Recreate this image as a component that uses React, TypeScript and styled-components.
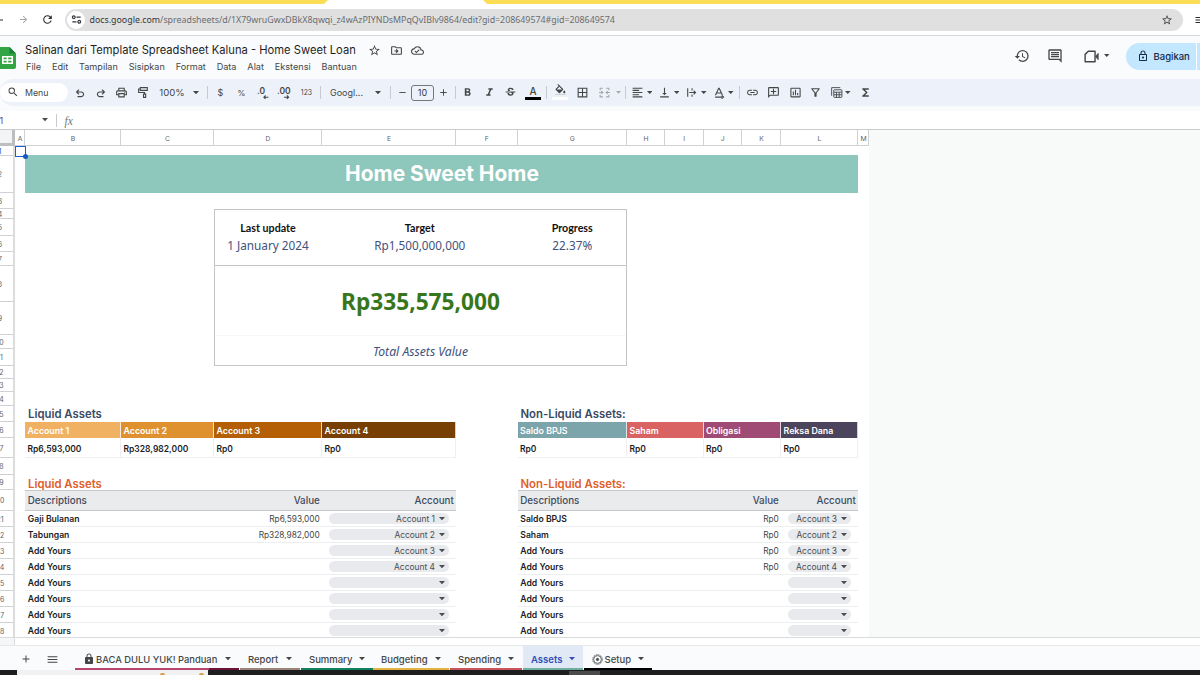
import React from 'react';
import styled, { createGlobalStyle, css } from 'styled-components';
import {
  MdOutlinePrint, MdStarBorder, MdOutlineDriveFileMove, MdOutlineCloudDone, MdHistory, MdOutlineComment,
  MdOutlineLock, MdLock, MdFormatBold, MdFormatItalic, MdStrikethroughS, MdFormatColorFill, MdBorderAll,
  MdFormatAlignLeft, MdVerticalAlignBottom, MdLink, MdOutlineAddComment, MdInsertChartOutlined,
  MdOutlineFilterAlt, MdFunctions, MdRefresh, MdArrowForward, MdArrowBack, MdSearch, MdAdd, MdRemove, MdMenu,
} from 'react-icons/md';

const Global = createGlobalStyle`
  *, *::before, *::after { box-sizing: border-box; }
  body { margin: 0; background: #fff; overflow: hidden; }
  svg { display: block; flex: none; }
`;

const Screen = styled.div`
  width: 1200px; height: 675px; overflow: hidden;
  display: flex; flex-direction: column;
  font-family: Inter, sans-serif; color: #444746; white-space: nowrap;
`;

/* ---------- browser chrome ---------- */
const TabStrip = styled.div`
  height: 4px; flex: none; display: flex; justify-content: space-between; background: #fff;
`;
const StripPart = styled.div<{ $side: 'left' | 'right' }>`
  background: #fbde55; height: 4px;
  width: ${p => (p.$side === 'left' ? 328 : 717)}px;
  clip-path: ${p => (p.$side === 'left'
    ? 'polygon(0 0, 100% 0, calc(100% - 4px) 100%, 0 100%)'
    : 'polygon(0 0, 100% 0, 100% 100%, 4px 100%)')};
`;
const AddressRow = styled.div`
  height: 32px; flex: none; display: flex; align-items: center; background: #fff;
  border-bottom: 1px solid #d5d6d8; color: #33363a;
`;
const NavIcon = styled.div<{ $w: number; $ml?: number; $dim?: boolean }>`
  width: ${p => p.$w}px; margin-left: ${p => p.$ml ?? 0}px; flex: none; display: flex; justify-content: center;
  color: ${p => (p.$dim ? '#a2a4a7' : '#2b2d30')};
`;
const UrlPill = styled.div`
  width: 1118px; height: 22px; margin-left: 12px; border-radius: 11px; background: #e0e0e0; flex: none;
  display: flex; align-items: center; padding: 0 10px 0 2px;
`;
const SiteInfo = styled.div`
  width: 18px; height: 18px; border-radius: 50%; background: #fff;
  display: flex; align-items: center; justify-content: center;
`;
const Url = styled.div`
  flex: 1; margin-left: 4.5px; font: 8.83px "Noto Sans", sans-serif; color: #6b6d70;
  span { color: #33363a; }
`;

/* ---------- document header ---------- */
const Header = styled.header`
  height: 43px; flex: none; display: flex; background: #f9fbfd; padding-top: 6px;
`;
const LogoBox = styled.div`width: 16px; height: 24px; margin-top: 4px; flex: none; overflow: hidden;`;
const TitleBlock = styled.div`margin-left: 9px; flex: 1;`;
const TitleRow = styled.div`
  display: flex; align-items: center; height: 16px; font-size: 11.2px; color: #1f1f1f;
`;
const TitleIcon = styled.div<{ $ml: number }>`margin: 1px 0 0 ${p => p.$ml}px; color: #444746;`;
const MenuRow = styled.nav`
  display: flex; gap: 10.85px; height: 17px; align-items: center; font-size: 9.12px; padding-left: 1px; color: #444746;
`;
const Actions = styled.div`display: flex; align-items: center; height: 28px;`;
const Action = styled.div<{ $ml: number }>`margin-left: ${p => p.$ml}px; color: #444746;`;
const Share = styled.div`
  width: 74.5px; height: 27px; margin-left: 16px; border-radius: 14px 0 0 14px; background: #c2e7ff; color: #13294b;
  display: flex; align-items: center; padding-left: 11px; font-size: 9.5px; font-weight: 500;
  i { width: 1px; height: 27px; background: #fff; margin-left: 6px; }
  span { margin-left: 5px; }
`;

/* ---------- toolbar ---------- */
const Toolbar = styled.div`
  height: 27px; flex: none; display: flex; align-items: center; background: #edf2fa;
  font-size: 9px; color: #444746; border-radius: 13px 0 0 13px;
`;
const ToolbarWrap = styled.div`height: 32px; flex: none; background: #f9fbfd;`;
const SearchPill = styled.div`
  width: 68px; height: 19px; border-radius: 10px; background: #fff; display: flex; align-items: center;
  padding: 0 0 0 7px; font-size: 8.8px; margin-top: -1px; flex: none;
  span { margin-left: 6px; }
`;
const Tool = styled.div<{ $ml: number; $w?: number; $color?: string; $size?: number; $flip?: boolean }>`
  width: ${p => p.$w ?? 14}px; margin-left: ${p => p.$ml}px; flex: none;
  display: flex; justify-content: center; align-items: center;
  color: ${p => p.$color ?? '#444746'}; font-size: ${p => p.$size ?? 9}px;
  ${p => p.$flip && css`transform: scaleX(-1);`}
`;
const Divider = styled.i<{ $ml: number }>`
  width: 1px; height: 13px; background: #c7cbd1; margin-left: ${p => p.$ml}px; flex: none;
`;
const SizeBox = styled.div`
  width: 23px; height: 16px; margin-left: 2px; border: 1px solid #747775; border-radius: 3px; flex: none;
  display: flex; align-items: center; justify-content: center; font-size: 9px; color: #33363a;
`;
const Swatched = styled.div<{ $bar: string }>`
  width: 16px; height: 15px; border-bottom: 3px solid ${p => p.$bar};
  display: flex; justify-content: center; align-items: center; font-size: 10px; font-weight: 500;
`;
const FillIcon = styled.div`height: 15px; overflow: hidden; margin-top: 1px; svg { clip-path: inset(0 0 16.6% 0); }`;

/* ---------- formula bar ---------- */
const FormulaBar = styled.div`
  height: 18px; flex: none; display: flex; align-items: center; background: #fff; font-size: 9px;
`;
const NameBox = styled.div`
  width: 41.5px; overflow: hidden; color: #5a3c6b;
  span { margin-left: -6.5px; }
`;
const Fx = styled.span`font: italic 11.5px "Liberation Serif", serif; color: #777; margin-left: 8px; padding-top: 1px;`;

/* ---------- sheet ---------- */
const SheetArea = styled.main`
  height: 509px; flex: none; background: #f8faf9; border-top: 1px solid #c9cbcd;
  border-bottom: 1px solid #d9dbdd; overflow: hidden;
`;
const COLS = [10, 96, 93, 108, 134, 61.5, 109.5, 38, 38.5, 38.5, 39, 77, 11];
const ROWS = [10, 37, 16, 10, 17, 16, 14, 36, 33, 14, 17, 13, 13, 14, 16, 16, 20, 17, 15, 21, 16, 16, 16, 16, 16, 16, 16, 16];
const ColumnHeads = styled.div`
  display: grid; grid-template-columns: 15px ${COLS.map(c => c + 'px').join(' ')}; width: 869px; height: 16px;
  background: #fff; font-size: 6.8px; color: #5f6368;
`;
const ColumnHead = styled.div`
  display: flex; align-items: center; justify-content: center; padding: 1px 0 0 1px;
  border-right: 1px solid #cfd1d3; border-bottom: 1px solid #cfd1d3;
`;
const Corner = styled.div`background: #f3f4f5; border-right: 3px solid #bcbec0; border-bottom: 3px solid #bcbec0;`;
const SheetBody = styled.div`display: flex; width: 869px; height: 492px; background: #fff; overflow: hidden;`;
const RowHeads = styled.div`
  width: 15px; flex: none; overflow: hidden; border-right: 2px solid #dcdcdc; font-size: 7px; color: #5f6368;
`;
const RowHead = styled.div<{ $h: number; $active?: boolean }>`
  width: 30px; margin-left: -15px; height: ${p => p.$h}px; border-bottom: 1px solid #cfd1d3;
  display: flex; align-items: center; justify-content: center; padding-top: 1px;
  color: ${p => (p.$active ? '#0b57d0' : 'inherit')};
`;
const Cells = styled.div`
  display: grid; flex: none; width: 854px;
  grid-template-columns: ${COLS.map(c => c + 'px').join(' ')};
  grid-template-rows: ${ROWS.map(r => r + 'px').join(' ')};
`;
const Area = styled.div<{ $col: string; $row: string }>`
  grid-column: ${p => p.$col}; grid-row: ${p => p.$row}; display: flex; align-items: center; min-width: 0;
`;
const Banner = styled(Area)`
  background: #8ec7bc; color: #fff; font-size: 20.95px; font-weight: 700; justify-content: center;
  margin-top: -1px; padding: 0 0 1px 1px;
`;
const ActiveCell = styled(Area)`
  position: relative; border: 1px solid #1a5fd8; margin: 0 -1px -1px 0;
  &::after {
    content: ''; position: absolute; right: -3px; bottom: -3px; width: 5px; height: 5px;
    border-radius: 50%; background: #1a56c4;
  }
`;
const Frame = styled(Area)`border: 1px solid #c4c5c6; margin-left: -0.5px;`;
const FaintRule = styled(Area)`border-top: 1px solid #f7f7f7; margin: 0 1px;`;
const Summary = styled(Area)<{ $kind: 'label' | 'value' | 'total' | 'caption' }>`
  justify-content: center; font-family: "Noto Sans", sans-serif;
  ${p => p.$kind === 'label' && css`font-family: Lato, sans-serif; font-size: 10.7px; font-weight: 700; color: #111;`}
  ${p => p.$kind === 'value' && css`font-size: 11.75px; color: #42527c; padding-top: 2px;`}
  ${p => p.$kind === 'total' && css`font-size: 22.7px; font-weight: 700; color: #38761d; padding-top: 2px;`}
  ${p => p.$kind === 'caption' && css`font-size: 12.2px; font-style: italic; color: #42527c; padding-top: 1px;`}
`;
const SectionTitle = styled(Area)<{ $accent?: boolean }>`
  padding-left: 3px; padding-top: ${p => (p.$accent ? 2 : 0)}px; font-size: 11.35px; font-weight: 600;
  color: ${p => (p.$accent ? '#e0602c' : '#3b4a63')};
`;
const AccountHead = styled(Area)<{ $bg: string }>`
  background: ${p => p.$bg}; color: #fff; font-size: 8.8px; font-weight: 600; padding-left: 2.5px;
  border-right: 1px solid rgba(255, 255, 255, .75);
`;
const AccountValue = styled(Area)`
  font-size: 8.5px; font-weight: 600; color: #1c1d1f; padding: 2px 0 0 2.5px;
  border-right: 1px solid #efefef; border-bottom: 1px solid #efefef;
`;
const TableHead = styled(Area)`
  background: #e9ebed; border-top: 1px solid #c6c8cb; border-bottom: 1px solid #c6c8cb;
  display: grid; font-size: 9.8px; font-weight: 500; color: #3e4a5e;
`;
const TableRow = styled(Area)`
  display: grid; border-bottom: 1px solid #eceeef; color: #444746;
`;
const Desc = styled.div`padding-left: 2.8px;`;
const Bold = styled(Desc)`font-size: 8.65px; font-weight: 600; color: #1c1d1f;`;
const Right = styled.div<{ $size?: number }>`
  text-align: right; padding-right: 2.2px; font-size: ${p => (p.$size ? p.$size + 'px' : 'inherit')};
`;
const Chip = styled.div`
  height: 11px; margin: 0 7px 0 6.5px; border-radius: 6px; background: #e8eaed; color: #4a4d51;
  display: flex; align-items: center; justify-content: flex-end; gap: 4px; padding-right: 4px; font-size: 8.42px;
`;

/* ---------- sheet tabs ---------- */
const ScrollGap = styled.div`
  height: 8px; flex: none; background: #fff; border-bottom: 1px solid #e6e8ea;
  &::before { content: ''; display: block; width: 15px; height: 7px; background: #f5f6f7; border-right: 1px solid #dcdcdc; }
`;
const SheetTabs = styled.footer`
  height: 24px; flex: none; background: #f9fbfd; display: flex; align-items: stretch; color: #444746; padding-left: 19px;
`;
const TabsButton = styled.div<{ $ml?: number }>`
  width: 13px; margin-left: ${p => p.$ml ?? 0}px; display: flex; align-items: center; justify-content: center; padding-top: 2px;
`;
const SheetTab = styled.div<{ $w: number; $line: string; $ml?: number; $active?: boolean }>`
  width: ${p => p.$w}px; margin-left: ${p => p.$ml ?? 1}px; padding: 4px 8px 0 8px; flex: none;
  display: flex; align-items: center; font-size: 9.5px; font-weight: ${p => (p.$active ? 600 : 500)};
  border: 0 solid transparent; border-bottom-width: 2px;
  border-image: ${p => p.$line} 1;
  background: ${p => (p.$active ? '#e1e9f7' : 'transparent')};
  color: ${p => (p.$active ? '#3050b8' : '#444746')};
  > svg:last-child { margin-left: auto; }
`;
const Label = styled.span<{ $ml?: number; $size?: number }>`
  margin-left: ${p => p.$ml ?? 0}px; font-size: ${p => (p.$size ? p.$size + 'px' : 'inherit')};
`;
const Taskbar = styled.div`
  height: 5px; flex: none; background: #1d1e1f; display: flex;
`;
const TaskPreview = styled.div`
  width: 191px; height: 5px; margin-left: 17px; background: #f1f1f1; display: flex; padding-left: 143px; gap: 34px;
  i { width: 5px; height: 2px; margin-top: 3px; background: #d9a04a; border-radius: 3px 3px 0 0; }
`;
const TaskItem = styled.div`width: 31px; height: 4px; margin: 1px 0 0 361px; background: #4a4b4c;`;

/* ---------- drawings ---------- */
const Caret = ({ s = 6 }: { s?: number }) => (
  <svg width={s} height={s / 2 + 0.3} viewBox="0 0 6 3.3"><path d="M0 0h6L3 3.3z" fill="currentColor" /></svg>
);
const S = ({ size = 13, sw = 2, children }: { size?: number; sw?: number; children: React.ReactNode }) => (
  <svg width={size} height={size} viewBox="0 0 24 24" fill="none" stroke="currentColor" strokeWidth={sw}>{children}</svg>
);
const Hook = () => (
  <svg width="12" height="12" viewBox="0 0 24 24" fill="currentColor">
    <path d="M7 20.5v-2.4h7.1q1.575 0 2.738-1T18 14.5 16.838 12 14.1 11.2H8l2.6 2.6L9 15.4 3.6 10 9 4.6l1.6 1.6L8 8.8h6.1q2.6 0 4.4 1.7t1.8 4-1.8 4-4.4 2z" />
  </svg>
);
const Logo = () => (
  <svg width="16" height="24" viewBox="0 0 16 24">
    <path d="M0 1h9.5L16 7.5V21a2 2 0 0 1-2 2H0z" fill="#34a544" />
    <path d="M9.5 1 16 7.5H9.5z" fill="#188038" />
    <path d="M2 10h11v8H2z M3.6 11.5v1.8h3v-1.8z M8.2 11.5v1.8h3.2v-1.8z M3.6 14.8v1.7h3v-1.7z M8.2 14.8v1.7h3.2v-1.7z" fill="#fff" fillRule="evenodd" />
  </svg>
);
const Decimals = ({ n, flip }: { n: string; flip?: boolean }) => (
  <svg width="16" height="14" viewBox="0 0 16 14">
    <text x={n.length > 2 ? 1 : 2} y="8" fontSize="8.5" fontWeight="600" fontFamily="Inter" fill="currentColor">{n}</text>
    <path d={flip ? 'M8 11.2h4.5M10.9 9.5l1.7 1.7-1.7 1.7' : 'M13.5 11.2H9M10.6 9.5l-1.7 1.7 1.7 1.7'} stroke="currentColor" strokeWidth="1.1" fill="none" />
  </svg>
);

const LIQUID: [string, string, string][] = [
  ['Gaji Bulanan', 'Rp6,593,000', 'Account 1'], ['Tabungan', 'Rp328,982,000', 'Account 2'],
  ['Add Yours', '', 'Account 3'], ['Add Yours', '', 'Account 4'],
  ['Add Yours', '', ''], ['Add Yours', '', ''], ['Add Yours', '', ''], ['Add Yours', '', ''],
];
const NON_LIQUID: [string, string, string][] = [
  ['Saldo BPJS', 'Rp0', 'Account 3'], ['Saham', 'Rp0', 'Account 2'],
  ['Add Yours', 'Rp0', 'Account 3'], ['Add Yours', 'Rp0', 'Account 4'],
  ['Add Yours', '', ''], ['Add Yours', '', ''], ['Add Yours', '', ''], ['Add Yours', '', ''],
];
const ACCOUNTS: [string, string, string, string][] = [
  ['2', 'Account 1', 'Rp6,593,000', '#f0b163'], ['3', 'Account 2', 'Rp328,982,000', '#e0912f'],
  ['4', 'Account 3', 'Rp0', '#b45f06'], ['5', 'Account 4', 'Rp0', '#783f04'],
  ['7', 'Saldo BPJS', 'Rp0', '#7ba4ab'], ['8 / 10', 'Saham', 'Rp0', '#d96262'],
  ['10 / 12', 'Obligasi', 'Rp0', '#a04a76'], ['12', 'Reksa Dana', 'Rp0', '#4c435c'],
];

const TableCols = styled.div<{ $t: string }>`
  display: grid; grid-template-columns: ${p => p.$t}; align-items: center; width: 100%;
`;

function AssetTable({ col, template, rows }: { col: string; template: string; rows: [string, string, string][] }) {
  return (
    <>
      <TableHead $col={col} $row="20">
        <TableCols $t={template}><Desc>Descriptions</Desc><Right>Value</Right><Right>Account</Right></TableCols>
      </TableHead>
      {rows.map(([d, v, a], i) => (
        <TableRow key={i} $col={col} $row={String(21 + i)}>
          <TableCols $t={template}>
            <Bold>{d}</Bold><Right $size={8.3}>{v}</Right><Chip>{a}<Caret /></Chip>
          </TableCols>
        </TableRow>
      ))}
    </>
  );
}

export default function App() {
  return (
    <Screen>
      <Global />
      <TabStrip><StripPart $side="left" /><StripPart $side="right" /></TabStrip>
      <AddressRow>
        <NavIcon $w={10} $ml={-6}><MdArrowBack size={12} /></NavIcon>
        <NavIcon $w={12} $ml={13} $dim><MdArrowForward size={11} /></NavIcon>
        <NavIcon $w={12} $ml={12}><MdRefresh size={13} /></NavIcon>
        <UrlPill>
          <SiteInfo>
            <S size={11} sw={2.6}><circle cx="6" cy="7" r="3" /><path d="M12 7h9M3 17h9" /><circle cx="18" cy="17" r="3" /></S>
          </SiteInfo>
          <Url><span>docs.google.com</span>/spreadsheets/d/1X79wruGwxDBkX8qwqi_z4wAzPIYNDsMPqQvIBlv9864/edit?gid=208649574#gid=208649574</Url>
          <MdStarBorder size={12} color="#444" />
        </UrlPill>
        <NavIcon $w={12} $ml={11}><MdMenu size={12} /></NavIcon>
      </AddressRow>

      <Header>
        <LogoBox><Logo /></LogoBox>
        <TitleBlock>
          <TitleRow>
            Salinan dari Template Spreadsheet Kaluna - Home Sweet Loan
            <TitleIcon $ml={12.5}><MdStarBorder size={13} /></TitleIcon>
            <TitleIcon $ml={8.5}><MdOutlineDriveFileMove size={13} /></TitleIcon>
            <TitleIcon $ml={8.5}><MdOutlineCloudDone size={13} /></TitleIcon>
          </TitleRow>
          <MenuRow>
            {['File', 'Edit', 'Tampilan', 'Sisipkan', 'Format', 'Data', 'Alat', 'Ekstensi', 'Bantuan'].map(m => <span key={m}>{m}</span>)}
          </MenuRow>
        </TitleBlock>
        <Actions>
          <Action $ml={0}><MdHistory size={16} /></Action>
          <Action $ml={17}><MdOutlineComment size={16} /></Action>
          <Action $ml={20}>
            <S size={17} sw={2}><path d="M7.5 4.5H17v15H3V9z" strokeLinejoin="round" /><path d="M18 11.5l3.5-4v9l-3.5-4z" fill="currentColor" strokeWidth="1" /></S>
          </Action>
          <Action $ml={4.5}><Caret s={5.5} /></Action>
          <Share><MdOutlineLock size={12} /><span>Bagikan</span><i /></Share>
        </Actions>
      </Header>

      <ToolbarWrap>
        <Toolbar>
          <SearchPill><MdSearch size={12} /><span>Menu</span></SearchPill>
          <Tool $ml={4.5}><Hook /></Tool>
          <Tool $ml={7} $flip><Hook /></Tool>
          <Tool $ml={7}><MdOutlinePrint size={13} /></Tool>
          <Tool $ml={7.5}><S size={13}><path d="M6 3h13v5H6zM6 5.5H3V12h11v3M12 15h4v6h-4z" /></S></Tool>
          <Tool $ml={10} $w={24} $size={9.6}>100%</Tool>
          <Tool $ml={8} $w={7}><Caret /></Tool>
          <Divider $ml={8} />
          <Tool $ml={5.5} $size={9}>$</Tool>
          <Tool $ml={7} $size={8}>%</Tool>
          <Tool $ml={7.5}><Decimals n=".0" /></Tool>
          <Tool $ml={7}><Decimals n=".00" flip /></Tool>
          <Tool $ml={8.5} $size={6.9}>123</Tool>
          <Divider $ml={6} />
          <Tool $ml={9.5} $w={33}>Googl...</Tool>
          <Tool $ml={11} $w={7}><Caret /></Tool>
          <Divider $ml={8.5} />
          <Tool $ml={4.5}><MdRemove size={11} /></Tool>
          <SizeBox>10</SizeBox>
          <Tool $ml={2.5}><MdAdd size={11} /></Tool>
          <Divider $ml={4} />
          <Tool $ml={5}><MdFormatBold size={13} /></Tool>
          <Tool $ml={7.5}><MdFormatItalic size={13} /></Tool>
          <Tool $ml={7.5}><MdStrikethroughS size={13} /></Tool>
          <Tool $ml={7.5} $w={16}><Swatched $bar="#000">A</Swatched></Tool>
          <Divider $ml={5} />
          <Tool $ml={5} $w={16}><Swatched $bar="#fff"><FillIcon><MdFormatColorFill size={13} /></FillIcon></Swatched></Tool>
          <Tool $ml={7.5}><MdBorderAll size={13} /></Tool>
          <Tool $ml={8} $color="#a4a7ab">
            <S size={13}><path d="M9 4H4v4M15 4h5v4M9 20H4v-4M15 20h5v-4M2 12h6M16 12h6M6 9.5l3 2.5-3 2.5M18 9.5 15 12l3 2.5" /></S>
          </Tool>
          <Tool $ml={3.5} $w={7} $color="#a4a7ab"><Caret s={5} /></Tool>
          <Divider $ml={3} />
          <Tool $ml={4}><MdFormatAlignLeft size={13} /></Tool>
          <Tool $ml={2} $w={7}><Caret s={5.5} /></Tool>
          <Tool $ml={4.5}><MdVerticalAlignBottom size={13} /></Tool>
          <Tool $ml={1.5} $w={7}><Caret s={5.5} /></Tool>
          <Tool $ml={4}><S size={13}><path d="M5 4v16M13 4v4.5M13 15.5V20M8 12h11M16 8.5l3.5 3.5-3.5 3.5" /></S></Tool>
          <Tool $ml={2.5} $w={7}><Caret s={5.5} /></Tool>
          <Tool $ml={4.5}><S size={13}><path d="M4.5 17 10.5 4h1l6 13M7 13h8M4 20.5h13M16 17.5l3.5 3-3.5 3" /></S></Tool>
          <Tool $ml={1.5} $w={7}><Caret s={5.5} /></Tool>
          <Divider $ml={4.5} />
          <Tool $ml={5.5}><MdLink size={13} /></Tool>
          <Tool $ml={7.5} $flip><MdOutlineAddComment size={13} /></Tool>
          <Tool $ml={7}><MdInsertChartOutlined size={13} /></Tool>
          <Tool $ml={6.5}><MdOutlineFilterAlt size={13} /></Tool>
          <Tool $ml={6.5}>
            <S size={13} sw={1.7}><path d="M3 18V3h16" /><rect x="7" y="7" width="15" height="14" rx="1" /><path d="M7 11.5h15M7 16.2h15M12 11.5V21M17 11.5V21" /></S>
          </Tool>
          <Tool $ml={1.5} $w={7}><Caret s={5.5} /></Tool>
          <Tool $ml={7}><MdFunctions size={13} /></Tool>
        </Toolbar>
      </ToolbarWrap>

      <FormulaBar>
        <NameBox><span>A1</span></NameBox>
        <Caret />
        <Divider $ml={8} />
        <Fx>fx</Fx>
      </FormulaBar>

      <SheetArea>
        <ColumnHeads>
          <Corner />
          {'ABCDEFGHIJKLM'.split('').map(c => <ColumnHead key={c}>{c}</ColumnHead>)}
        </ColumnHeads>
        <SheetBody>
          <RowHeads>
            {ROWS.map((h, i) => <RowHead key={i} $h={h} $active={i === 0}>{i + 1}</RowHead>)}
          </RowHeads>
          <Cells>
            <Banner $col="2 / 13" $row="2">Home Sweet Home</Banner>
            <ActiveCell $col="1" $row="1" />

            <Frame $col="4 / 8" $row="4 / 12" />
            <Frame $col="4 / 8" $row="4 / 8" />
            <FaintRule $col="4 / 8" $row="10" />
            <Summary $kind="label" $col="4" $row="5">Last update</Summary>
            <Summary $kind="label" $col="5 / 7" $row="5">Target</Summary>
            <Summary $kind="label" $col="7" $row="5">Progress</Summary>
            <Summary $kind="value" $col="4" $row="6">1 January 2024</Summary>
            <Summary $kind="value" $col="5 / 7" $row="6">Rp1,500,000,000</Summary>
            <Summary $kind="value" $col="7" $row="6">22.37%</Summary>
            <Summary $kind="total" $col="4 / 8" $row="8 / 10">Rp335,575,000</Summary>
            <Summary $kind="caption" $col="4 / 8" $row="10 / 12">Total Assets Value</Summary>

            <SectionTitle $col="2 / 4" $row="15">Liquid Assets</SectionTitle>
            <SectionTitle $col="7 / 10" $row="15">Non-Liquid Assets:</SectionTitle>
            {ACCOUNTS.map(([col, name, value, bg]) => (
              <React.Fragment key={name}>
                <AccountHead $col={col} $row="16" $bg={bg}>{name}</AccountHead>
                <AccountValue $col={col} $row="17">{value}</AccountValue>
              </React.Fragment>
            ))}

            <SectionTitle $accent $col="2 / 4" $row="19">Liquid Assets</SectionTitle>
            <SectionTitle $accent $col="7 / 10" $row="19">Non-Liquid Assets:</SectionTitle>
            <AssetTable col="2 / 6" template="189px 108px 134px" rows={LIQUID} />
            <AssetTable col="7 / 13" template="148px 115.5px 77px" rows={NON_LIQUID} />
          </Cells>
        </SheetBody>
      </SheetArea>

      <ScrollGap />
      <SheetTabs>
        <TabsButton><MdAdd size={12} /></TabsButton>
        <TabsButton $ml={14}><MdMenu size={13} /></TabsButton>
        <SheetTab $ml={16} $w={164} $line="linear-gradient(90deg,#b8446c 133px,#6d1238 133px)">
          <MdLock size={12} /><Label $ml={1} $size={9.39}>BACA DULU YUK! Panduan</Label><Caret />
        </SheetTab>
        <SheetTab $w={60} $line="linear-gradient(#9c8478,#9c8478)"><Label>Report</Label><Caret /></SheetTab>
        <SheetTab $w={72} $line="linear-gradient(#12805c,#12805c)"><Label>Summary</Label><Caret /></SheetTab>
        <SheetTab $w={76} $ml={0} $line="linear-gradient(#e3b341,#e3b341)"><Label>Budgeting</Label><Caret /></SheetTab>
        <SheetTab $w={72} $line="linear-gradient(#c9545c,#c9545c)"><Label>Spending</Label><Caret /></SheetTab>
        <SheetTab $w={60} $active $line="linear-gradient(#6fae9f,#6fae9f)"><Label>Assets</Label><Caret /></SheetTab>
        <SheetTab $w={68} $line="linear-gradient(#000,#000)">
          <S size={11} sw={1.8}>
            <circle cx="12" cy="12" r="10.5" strokeDasharray="2.8 1.6" /><circle cx="12" cy="12" r="8.5" />
            <circle cx="12" cy="12" r="2.5" fill="currentColor" />
          </S>
          <Label $ml={1.5}>Setup</Label><Caret />
        </SheetTab>
      </SheetTabs>
      <Taskbar><TaskPreview><i /><i /></TaskPreview><TaskItem /></Taskbar>
    </Screen>
  );
}
